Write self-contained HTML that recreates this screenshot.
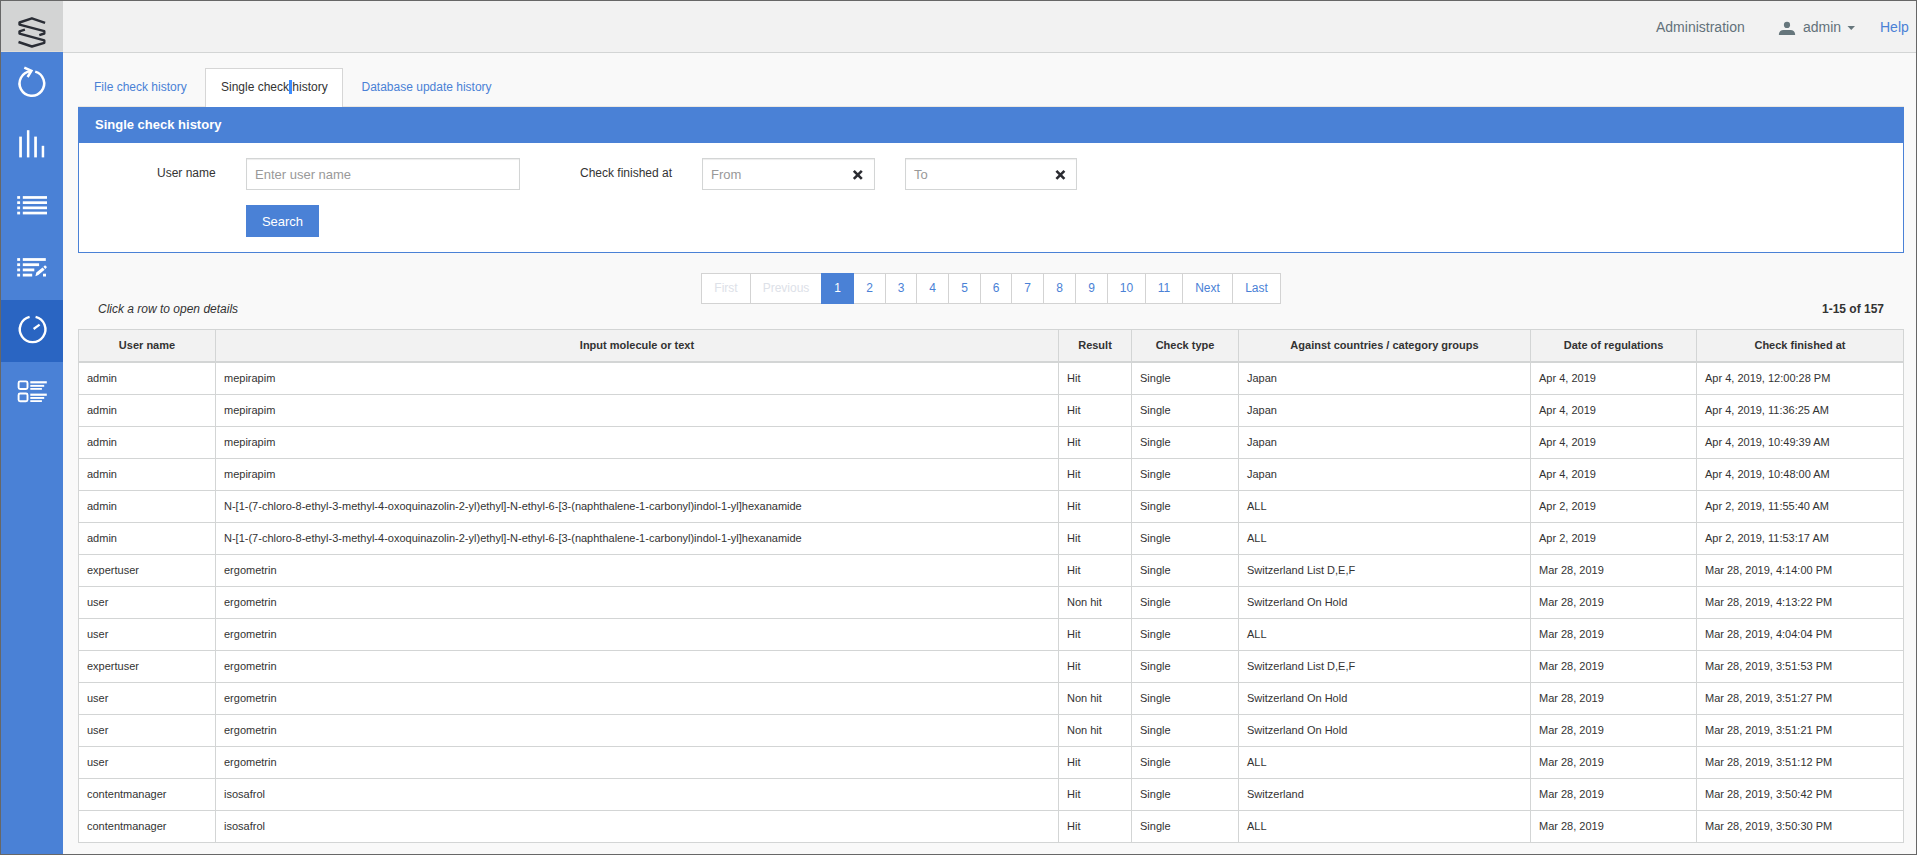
<!DOCTYPE html>
<html><head><meta charset="utf-8"><style>
*{box-sizing:border-box;margin:0;padding:0}
html,body{width:1917px;height:855px;overflow:hidden}
body{position:relative;background:#676767;font-family:"Liberation Sans",sans-serif;color:#333}
.a{position:absolute}
.t{position:absolute;white-space:nowrap}
</style></head><body>
<div class="a" style="left:1px;top:1px;width:1915px;height:853px;background:#f9f9f9"></div>
<div class="a" style="left:1px;top:1px;width:62px;height:50px;background:#d3d4d4"></div>
<div class="a" style="left:1px;top:51px;width:62px;height:1px;background:#dfddd8"></div>
<div class="a" style="left:1px;top:52px;width:62px;height:802px;background:#4a81d6"></div>
<div class="a" style="left:1px;top:300px;width:62px;height:62px;background:#2a65c2"></div>
<div class="a" style="left:63px;top:1px;width:1853px;height:51px;background:#f2f2f2"></div>
<div class="a" style="left:63px;top:52px;width:1853px;height:1px;background:#d3d5d5"></div>
<div class="t" style="left:1656px;top:19px;font-size:14px;line-height:16px;color:#62717a">Administration</div>
<div class="t" style="left:1803px;top:19px;font-size:14px;line-height:16px;color:#62717a">admin</div>
<div class="t" style="left:1880px;top:19px;font-size:14px;line-height:16px;color:#4a81d6">Help</div>
<div class="a" style="left:205px;top:68px;width:138px;height:39px;background:#fff;border:1px solid #d6d6d6;border-bottom:none"></div>
<div class="t" style="left:94px;top:80px;font-size:12px;line-height:14px;color:#4a81d6">File check history</div>
<div class="t" style="left:221px;top:80px;font-size:12px;line-height:14px;color:#333">Single check history</div>
<div class="t" style="left:361.5px;top:80px;font-size:12px;line-height:14px;color:#4a81d6">Database update history</div>
<div class="a" style="left:289px;top:80px;width:3px;height:14px;background:#3a8cff"></div>
<div class="a" style="left:78px;top:106px;width:127px;height:1px;background:#ece8e2"></div>
<div class="a" style="left:343px;top:106px;width:1561px;height:1px;background:#ece8e2"></div>
<div class="a" style="left:78px;top:107px;width:1826px;height:36px;background:#4a81d6"></div>
<div class="a" style="left:78px;top:143px;width:1826px;height:110px;background:#fff;border:1px solid #4a81d6;border-top:none"></div>
<div class="t" style="left:95px;top:117px;font-size:13px;line-height:15px;font-weight:bold;color:#fff">Single check history</div>
<div class="t" style="left:157px;top:166px;font-size:12px;line-height:14px">User name</div>
<div class="a" style="left:246px;top:158px;width:274px;height:32px;background:#fff;border:1px solid #d3d5d5;box-shadow:inset 0 1px 1px rgba(0,0,0,.075)"></div>
<div class="t" style="left:255px;top:167px;font-size:13px;line-height:15px;color:#999">Enter user name</div>
<div class="t" style="left:580px;top:166px;font-size:12px;line-height:14px">Check finished at</div>
<div class="a" style="left:702px;top:158px;width:173px;height:32px;background:#fff;border:1px solid #d3d5d5;box-shadow:inset 0 1px 1px rgba(0,0,0,.075)"></div>
<div class="t" style="left:711px;top:167px;font-size:13px;line-height:15px;color:#999">From</div>
<div class="a" style="left:905px;top:158px;width:172px;height:32px;background:#fff;border:1px solid #d3d5d5;box-shadow:inset 0 1px 1px rgba(0,0,0,.075)"></div>
<div class="t" style="left:914px;top:167px;font-size:13px;line-height:15px;color:#999">To</div>
<div class="a" style="left:246px;top:205px;width:73px;height:32px;background:#4a81d6"></div>
<div class="t" style="left:246px;top:214px;width:73px;text-align:center;font-size:13px;line-height:15px;color:#fff">Search</div>
<div class="a" style="left:701px;top:273px;width:50px;height:31px;background:#fff;border:1px solid #d3d3d3;color:#dde1e8;font-size:12px;line-height:29px;text-align:center">First</div>
<div class="a" style="left:750px;top:273px;width:72px;height:31px;background:#fff;border:1px solid #d3d3d3;color:#dde1e8;font-size:12px;line-height:29px;text-align:center">Previous</div>
<div class="a" style="left:821px;top:273px;width:33px;height:31px;background:#4a81d6;border:1px solid #4a81d6;color:#fff;z-index:2;font-size:12px;line-height:29px;text-align:center">1</div>
<div class="a" style="left:853px;top:273px;width:33px;height:31px;background:#fff;border:1px solid #d3d3d3;color:#4a81d6;font-size:12px;line-height:29px;text-align:center">2</div>
<div class="a" style="left:885px;top:273px;width:32px;height:31px;background:#fff;border:1px solid #d3d3d3;color:#4a81d6;font-size:12px;line-height:29px;text-align:center">3</div>
<div class="a" style="left:916px;top:273px;width:33px;height:31px;background:#fff;border:1px solid #d3d3d3;color:#4a81d6;font-size:12px;line-height:29px;text-align:center">4</div>
<div class="a" style="left:948px;top:273px;width:33px;height:31px;background:#fff;border:1px solid #d3d3d3;color:#4a81d6;font-size:12px;line-height:29px;text-align:center">5</div>
<div class="a" style="left:980px;top:273px;width:32px;height:31px;background:#fff;border:1px solid #d3d3d3;color:#4a81d6;font-size:12px;line-height:29px;text-align:center">6</div>
<div class="a" style="left:1011px;top:273px;width:33px;height:31px;background:#fff;border:1px solid #d3d3d3;color:#4a81d6;font-size:12px;line-height:29px;text-align:center">7</div>
<div class="a" style="left:1043px;top:273px;width:33px;height:31px;background:#fff;border:1px solid #d3d3d3;color:#4a81d6;font-size:12px;line-height:29px;text-align:center">8</div>
<div class="a" style="left:1075px;top:273px;width:33px;height:31px;background:#fff;border:1px solid #d3d3d3;color:#4a81d6;font-size:12px;line-height:29px;text-align:center">9</div>
<div class="a" style="left:1107px;top:273px;width:39px;height:31px;background:#fff;border:1px solid #d3d3d3;color:#4a81d6;font-size:12px;line-height:29px;text-align:center">10</div>
<div class="a" style="left:1145px;top:273px;width:38px;height:31px;background:#fff;border:1px solid #d3d3d3;color:#4a81d6;font-size:12px;line-height:29px;text-align:center">11</div>
<div class="a" style="left:1182px;top:273px;width:51px;height:31px;background:#fff;border:1px solid #d3d3d3;color:#4a81d6;font-size:12px;line-height:29px;text-align:center">Next</div>
<div class="a" style="left:1232px;top:273px;width:49px;height:31px;background:#fff;border:1px solid #d3d3d3;color:#4a81d6;font-size:12px;line-height:29px;text-align:center">Last</div>
<div class="t" style="left:98px;top:302px;font-size:12px;line-height:14px;font-style:italic">Click a row to open details</div>
<div class="t" style="left:1822px;top:302px;width:62px;text-align:right;font-size:12px;line-height:14px;font-weight:bold">1-15 of 157</div>
<div class="a" style="left:78px;top:329px;width:1826px;height:514px;background:#fff;border:1px solid #d3d5d5"></div>
<div class="a" style="left:79px;top:330px;width:1824px;height:31px;background:#f2f2f2"></div>
<div class="a" style="left:79px;top:361px;width:1824px;height:2px;background:#d3d5d5"></div>
<div class="a" style="left:79px;top:394px;width:1824px;height:1px;background:#d3d5d5"></div>
<div class="a" style="left:79px;top:426px;width:1824px;height:1px;background:#d3d5d5"></div>
<div class="a" style="left:79px;top:458px;width:1824px;height:1px;background:#d3d5d5"></div>
<div class="a" style="left:79px;top:490px;width:1824px;height:1px;background:#d3d5d5"></div>
<div class="a" style="left:79px;top:522px;width:1824px;height:1px;background:#d3d5d5"></div>
<div class="a" style="left:79px;top:554px;width:1824px;height:1px;background:#d3d5d5"></div>
<div class="a" style="left:79px;top:586px;width:1824px;height:1px;background:#d3d5d5"></div>
<div class="a" style="left:79px;top:618px;width:1824px;height:1px;background:#d3d5d5"></div>
<div class="a" style="left:79px;top:650px;width:1824px;height:1px;background:#d3d5d5"></div>
<div class="a" style="left:79px;top:682px;width:1824px;height:1px;background:#d3d5d5"></div>
<div class="a" style="left:79px;top:714px;width:1824px;height:1px;background:#d3d5d5"></div>
<div class="a" style="left:79px;top:746px;width:1824px;height:1px;background:#d3d5d5"></div>
<div class="a" style="left:79px;top:778px;width:1824px;height:1px;background:#d3d5d5"></div>
<div class="a" style="left:79px;top:810px;width:1824px;height:1px;background:#d3d5d5"></div>
<div class="a" style="left:215px;top:330px;width:1px;height:512px;background:#d3d5d5"></div>
<div class="a" style="left:1058px;top:330px;width:1px;height:512px;background:#d3d5d5"></div>
<div class="a" style="left:1131px;top:330px;width:1px;height:512px;background:#d3d5d5"></div>
<div class="a" style="left:1238px;top:330px;width:1px;height:512px;background:#d3d5d5"></div>
<div class="a" style="left:1530px;top:330px;width:1px;height:512px;background:#d3d5d5"></div>
<div class="a" style="left:1696px;top:330px;width:1px;height:512px;background:#d3d5d5"></div>
<div class="t" style="left:79px;top:339px;width:136px;text-align:center;font-size:11px;line-height:13px;font-weight:bold">User name</div>
<div class="t" style="left:216px;top:339px;width:842px;text-align:center;font-size:11px;line-height:13px;font-weight:bold">Input molecule or text</div>
<div class="t" style="left:1059px;top:339px;width:72px;text-align:center;font-size:11px;line-height:13px;font-weight:bold">Result</div>
<div class="t" style="left:1132px;top:339px;width:106px;text-align:center;font-size:11px;line-height:13px;font-weight:bold">Check type</div>
<div class="t" style="left:1239px;top:339px;width:291px;text-align:center;font-size:11px;line-height:13px;font-weight:bold">Against countries / category groups</div>
<div class="t" style="left:1531px;top:339px;width:165px;text-align:center;font-size:11px;line-height:13px;font-weight:bold">Date of regulations</div>
<div class="t" style="left:1697px;top:339px;width:206px;text-align:center;font-size:11px;line-height:13px;font-weight:bold">Check finished at</div>
<div class="t" style="left:87px;top:372px;font-size:11px;line-height:13px">admin</div>
<div class="t" style="left:224px;top:372px;font-size:11px;line-height:13px">mepirapim</div>
<div class="t" style="left:1067px;top:372px;font-size:11px;line-height:13px">Hit</div>
<div class="t" style="left:1140px;top:372px;font-size:11px;line-height:13px">Single</div>
<div class="t" style="left:1247px;top:372px;font-size:11px;line-height:13px">Japan</div>
<div class="t" style="left:1539px;top:372px;font-size:11px;line-height:13px">Apr 4, 2019</div>
<div class="t" style="left:1705px;top:372px;font-size:11px;line-height:13px">Apr 4, 2019, 12:00:28 PM</div>
<div class="t" style="left:87px;top:404px;font-size:11px;line-height:13px">admin</div>
<div class="t" style="left:224px;top:404px;font-size:11px;line-height:13px">mepirapim</div>
<div class="t" style="left:1067px;top:404px;font-size:11px;line-height:13px">Hit</div>
<div class="t" style="left:1140px;top:404px;font-size:11px;line-height:13px">Single</div>
<div class="t" style="left:1247px;top:404px;font-size:11px;line-height:13px">Japan</div>
<div class="t" style="left:1539px;top:404px;font-size:11px;line-height:13px">Apr 4, 2019</div>
<div class="t" style="left:1705px;top:404px;font-size:11px;line-height:13px">Apr 4, 2019, 11:36:25 AM</div>
<div class="t" style="left:87px;top:436px;font-size:11px;line-height:13px">admin</div>
<div class="t" style="left:224px;top:436px;font-size:11px;line-height:13px">mepirapim</div>
<div class="t" style="left:1067px;top:436px;font-size:11px;line-height:13px">Hit</div>
<div class="t" style="left:1140px;top:436px;font-size:11px;line-height:13px">Single</div>
<div class="t" style="left:1247px;top:436px;font-size:11px;line-height:13px">Japan</div>
<div class="t" style="left:1539px;top:436px;font-size:11px;line-height:13px">Apr 4, 2019</div>
<div class="t" style="left:1705px;top:436px;font-size:11px;line-height:13px">Apr 4, 2019, 10:49:39 AM</div>
<div class="t" style="left:87px;top:468px;font-size:11px;line-height:13px">admin</div>
<div class="t" style="left:224px;top:468px;font-size:11px;line-height:13px">mepirapim</div>
<div class="t" style="left:1067px;top:468px;font-size:11px;line-height:13px">Hit</div>
<div class="t" style="left:1140px;top:468px;font-size:11px;line-height:13px">Single</div>
<div class="t" style="left:1247px;top:468px;font-size:11px;line-height:13px">Japan</div>
<div class="t" style="left:1539px;top:468px;font-size:11px;line-height:13px">Apr 4, 2019</div>
<div class="t" style="left:1705px;top:468px;font-size:11px;line-height:13px">Apr 4, 2019, 10:48:00 AM</div>
<div class="t" style="left:87px;top:500px;font-size:11px;line-height:13px">admin</div>
<div class="t" style="left:224px;top:500px;font-size:11px;line-height:13px">N-[1-(7-chloro-8-ethyl-3-methyl-4-oxoquinazolin-2-yl)ethyl]-N-ethyl-6-[3-(naphthalene-1-carbonyl)indol-1-yl]hexanamide</div>
<div class="t" style="left:1067px;top:500px;font-size:11px;line-height:13px">Hit</div>
<div class="t" style="left:1140px;top:500px;font-size:11px;line-height:13px">Single</div>
<div class="t" style="left:1247px;top:500px;font-size:11px;line-height:13px">ALL</div>
<div class="t" style="left:1539px;top:500px;font-size:11px;line-height:13px">Apr 2, 2019</div>
<div class="t" style="left:1705px;top:500px;font-size:11px;line-height:13px">Apr 2, 2019, 11:55:40 AM</div>
<div class="t" style="left:87px;top:532px;font-size:11px;line-height:13px">admin</div>
<div class="t" style="left:224px;top:532px;font-size:11px;line-height:13px">N-[1-(7-chloro-8-ethyl-3-methyl-4-oxoquinazolin-2-yl)ethyl]-N-ethyl-6-[3-(naphthalene-1-carbonyl)indol-1-yl]hexanamide</div>
<div class="t" style="left:1067px;top:532px;font-size:11px;line-height:13px">Hit</div>
<div class="t" style="left:1140px;top:532px;font-size:11px;line-height:13px">Single</div>
<div class="t" style="left:1247px;top:532px;font-size:11px;line-height:13px">ALL</div>
<div class="t" style="left:1539px;top:532px;font-size:11px;line-height:13px">Apr 2, 2019</div>
<div class="t" style="left:1705px;top:532px;font-size:11px;line-height:13px">Apr 2, 2019, 11:53:17 AM</div>
<div class="t" style="left:87px;top:564px;font-size:11px;line-height:13px">expertuser</div>
<div class="t" style="left:224px;top:564px;font-size:11px;line-height:13px">ergometrin</div>
<div class="t" style="left:1067px;top:564px;font-size:11px;line-height:13px">Hit</div>
<div class="t" style="left:1140px;top:564px;font-size:11px;line-height:13px">Single</div>
<div class="t" style="left:1247px;top:564px;font-size:11px;line-height:13px">Switzerland List D,E,F</div>
<div class="t" style="left:1539px;top:564px;font-size:11px;line-height:13px">Mar 28, 2019</div>
<div class="t" style="left:1705px;top:564px;font-size:11px;line-height:13px">Mar 28, 2019, 4:14:00 PM</div>
<div class="t" style="left:87px;top:596px;font-size:11px;line-height:13px">user</div>
<div class="t" style="left:224px;top:596px;font-size:11px;line-height:13px">ergometrin</div>
<div class="t" style="left:1067px;top:596px;font-size:11px;line-height:13px">Non hit</div>
<div class="t" style="left:1140px;top:596px;font-size:11px;line-height:13px">Single</div>
<div class="t" style="left:1247px;top:596px;font-size:11px;line-height:13px">Switzerland On Hold</div>
<div class="t" style="left:1539px;top:596px;font-size:11px;line-height:13px">Mar 28, 2019</div>
<div class="t" style="left:1705px;top:596px;font-size:11px;line-height:13px">Mar 28, 2019, 4:13:22 PM</div>
<div class="t" style="left:87px;top:628px;font-size:11px;line-height:13px">user</div>
<div class="t" style="left:224px;top:628px;font-size:11px;line-height:13px">ergometrin</div>
<div class="t" style="left:1067px;top:628px;font-size:11px;line-height:13px">Hit</div>
<div class="t" style="left:1140px;top:628px;font-size:11px;line-height:13px">Single</div>
<div class="t" style="left:1247px;top:628px;font-size:11px;line-height:13px">ALL</div>
<div class="t" style="left:1539px;top:628px;font-size:11px;line-height:13px">Mar 28, 2019</div>
<div class="t" style="left:1705px;top:628px;font-size:11px;line-height:13px">Mar 28, 2019, 4:04:04 PM</div>
<div class="t" style="left:87px;top:660px;font-size:11px;line-height:13px">expertuser</div>
<div class="t" style="left:224px;top:660px;font-size:11px;line-height:13px">ergometrin</div>
<div class="t" style="left:1067px;top:660px;font-size:11px;line-height:13px">Hit</div>
<div class="t" style="left:1140px;top:660px;font-size:11px;line-height:13px">Single</div>
<div class="t" style="left:1247px;top:660px;font-size:11px;line-height:13px">Switzerland List D,E,F</div>
<div class="t" style="left:1539px;top:660px;font-size:11px;line-height:13px">Mar 28, 2019</div>
<div class="t" style="left:1705px;top:660px;font-size:11px;line-height:13px">Mar 28, 2019, 3:51:53 PM</div>
<div class="t" style="left:87px;top:692px;font-size:11px;line-height:13px">user</div>
<div class="t" style="left:224px;top:692px;font-size:11px;line-height:13px">ergometrin</div>
<div class="t" style="left:1067px;top:692px;font-size:11px;line-height:13px">Non hit</div>
<div class="t" style="left:1140px;top:692px;font-size:11px;line-height:13px">Single</div>
<div class="t" style="left:1247px;top:692px;font-size:11px;line-height:13px">Switzerland On Hold</div>
<div class="t" style="left:1539px;top:692px;font-size:11px;line-height:13px">Mar 28, 2019</div>
<div class="t" style="left:1705px;top:692px;font-size:11px;line-height:13px">Mar 28, 2019, 3:51:27 PM</div>
<div class="t" style="left:87px;top:724px;font-size:11px;line-height:13px">user</div>
<div class="t" style="left:224px;top:724px;font-size:11px;line-height:13px">ergometrin</div>
<div class="t" style="left:1067px;top:724px;font-size:11px;line-height:13px">Non hit</div>
<div class="t" style="left:1140px;top:724px;font-size:11px;line-height:13px">Single</div>
<div class="t" style="left:1247px;top:724px;font-size:11px;line-height:13px">Switzerland On Hold</div>
<div class="t" style="left:1539px;top:724px;font-size:11px;line-height:13px">Mar 28, 2019</div>
<div class="t" style="left:1705px;top:724px;font-size:11px;line-height:13px">Mar 28, 2019, 3:51:21 PM</div>
<div class="t" style="left:87px;top:756px;font-size:11px;line-height:13px">user</div>
<div class="t" style="left:224px;top:756px;font-size:11px;line-height:13px">ergometrin</div>
<div class="t" style="left:1067px;top:756px;font-size:11px;line-height:13px">Hit</div>
<div class="t" style="left:1140px;top:756px;font-size:11px;line-height:13px">Single</div>
<div class="t" style="left:1247px;top:756px;font-size:11px;line-height:13px">ALL</div>
<div class="t" style="left:1539px;top:756px;font-size:11px;line-height:13px">Mar 28, 2019</div>
<div class="t" style="left:1705px;top:756px;font-size:11px;line-height:13px">Mar 28, 2019, 3:51:12 PM</div>
<div class="t" style="left:87px;top:788px;font-size:11px;line-height:13px">contentmanager</div>
<div class="t" style="left:224px;top:788px;font-size:11px;line-height:13px">isosafrol</div>
<div class="t" style="left:1067px;top:788px;font-size:11px;line-height:13px">Hit</div>
<div class="t" style="left:1140px;top:788px;font-size:11px;line-height:13px">Single</div>
<div class="t" style="left:1247px;top:788px;font-size:11px;line-height:13px">Switzerland</div>
<div class="t" style="left:1539px;top:788px;font-size:11px;line-height:13px">Mar 28, 2019</div>
<div class="t" style="left:1705px;top:788px;font-size:11px;line-height:13px">Mar 28, 2019, 3:50:42 PM</div>
<div class="t" style="left:87px;top:820px;font-size:11px;line-height:13px">contentmanager</div>
<div class="t" style="left:224px;top:820px;font-size:11px;line-height:13px">isosafrol</div>
<div class="t" style="left:1067px;top:820px;font-size:11px;line-height:13px">Hit</div>
<div class="t" style="left:1140px;top:820px;font-size:11px;line-height:13px">Single</div>
<div class="t" style="left:1247px;top:820px;font-size:11px;line-height:13px">ALL</div>
<div class="t" style="left:1539px;top:820px;font-size:11px;line-height:13px">Mar 28, 2019</div>
<div class="t" style="left:1705px;top:820px;font-size:11px;line-height:13px">Mar 28, 2019, 3:50:30 PM</div>
<svg class="a" style="left:0;top:0" width="1917" height="855" viewBox="0 0 1917 855">
<g fill="none" stroke="#2a2d35" stroke-width="2.4" stroke-linejoin="round" stroke-linecap="butt">
<polyline points="45.1,22.9 31.9,18.3 19.5,22.5 19.5,24.6 44.3,31.2 44.3,33.5 39.3,35.2"/>
<polyline points="24.9,29.6 19.5,31.3 19.5,33.6 44.3,40.4 44.3,42.8 31.9,46.5 18.5,42"/>
</g>
<!-- refresh -->
<g fill="none" stroke="#fff" stroke-width="2.5">
<path d="M 35.2,71.6 A 12.3 12.3 0 1 1 30.6,71.2"/>
<polyline points="24.3,67.6 31.4,70.8 27.6,77" stroke-linejoin="miter"/>
</g>
<!-- bars -->
<g fill="#fff">
<rect x="19.2" y="136.6" width="2.7" height="20.8"/>
<rect x="26.9" y="130.2" width="2.5" height="27.2"/>
<rect x="34.2" y="136.6" width="2.7" height="20.8"/>
<rect x="41.7" y="145.8" width="2.5" height="11.6"/>
</g>
<!-- list -->
<g fill="#fff">
<rect x="17.2" y="196.1" width="2.9" height="2.7"/><rect x="22.8" y="196.1" width="24.2" height="2.7"/>
<rect x="17.2" y="201.3" width="2.9" height="2.7"/><rect x="22.8" y="201.3" width="24.2" height="2.7"/>
<rect x="17.2" y="206.5" width="2.9" height="2.7"/><rect x="22.8" y="206.5" width="24.2" height="2.7"/>
<rect x="17.2" y="211.7" width="2.9" height="2.7"/><rect x="22.8" y="211.7" width="24.2" height="2.7"/>
</g>
<!-- list edit -->
<g fill="#fff">
<rect x="17.2" y="258.1" width="2.9" height="2.8"/><rect x="22.8" y="258.1" width="23" height="2.8"/>
<rect x="17.2" y="263.3" width="2.9" height="2.8"/><rect x="22.8" y="263.3" width="16.3" height="2.8"/>
<rect x="17.2" y="268.5" width="2.9" height="2.8"/><rect x="22.8" y="268.5" width="11.5" height="2.8"/>
<rect x="17.2" y="273.7" width="2.9" height="2.8"/><rect x="22.8" y="273.7" width="9.4" height="2.8"/>
<rect x="43" y="273.7" width="3" height="2.8"/>
<path d="M35.4,276.3 L36.3,272.6 L42.6,267.4 L44.6,269.8 L38.3,275 Z"/>
<path d="M43.4,266.7 L44.7,265.6 Q45.3,265.2 45.8,265.7 L46.6,266.7 Q47,267.3 46.5,267.8 L45.3,268.9 Z"/>
</g>
<!-- gauge -->
<g fill="none" stroke="#fff" stroke-width="2.4">
<path d="M 35.6,316.9 A 12.8 12.8 0 1 1 29.6,316.9"/>
<line x1="33.6" y1="329" x2="39.6" y2="324.7" stroke-width="2.2"/>
</g>
<!-- checklist -->
<g fill="none" stroke="#fff" stroke-width="1.9">
<rect x="18.6" y="381.4" width="8.9" height="7.6" rx="1.5"/>
<rect x="18.6" y="393.5" width="8.9" height="7.8" rx="1.5"/>
</g>
<g fill="#fff">
<rect x="30.3" y="381.2" width="16.5" height="2.2"/><rect x="30.3" y="384.9" width="13.9" height="1.9"/><rect x="30.3" y="388" width="11.6" height="1.8"/>
<rect x="30.3" y="393.6" width="16.5" height="2.2"/><rect x="30.3" y="397" width="13.9" height="1.9"/><rect x="30.3" y="400.2" width="11.6" height="1.8"/>
</g>
<!-- person -->
<g fill="#66767c">
<circle cx="1787" cy="24.9" r="3.1"/>
<path d="M1778.9,35 L1778.9,34 Q1779.6,30.1 1783.5,30.1 L1790.5,30.1 Q1794.4,30.1 1795.1,34 L1795.1,35 Z"/>
<path d="M1847.5,26 L1855,26 L1851.25,30 Z"/>
</g>
<!-- x icons -->
<g stroke="#2a2b31" stroke-width="2.6" stroke-linecap="butt">
<path d="M853.8,170.9 L861.8,178.9 M861.8,170.9 L853.8,178.9"/>
<path d="M1056.4,170.9 L1064.4,178.9 M1064.4,170.9 L1056.4,178.9"/>
</g>
</svg>

</body></html>
